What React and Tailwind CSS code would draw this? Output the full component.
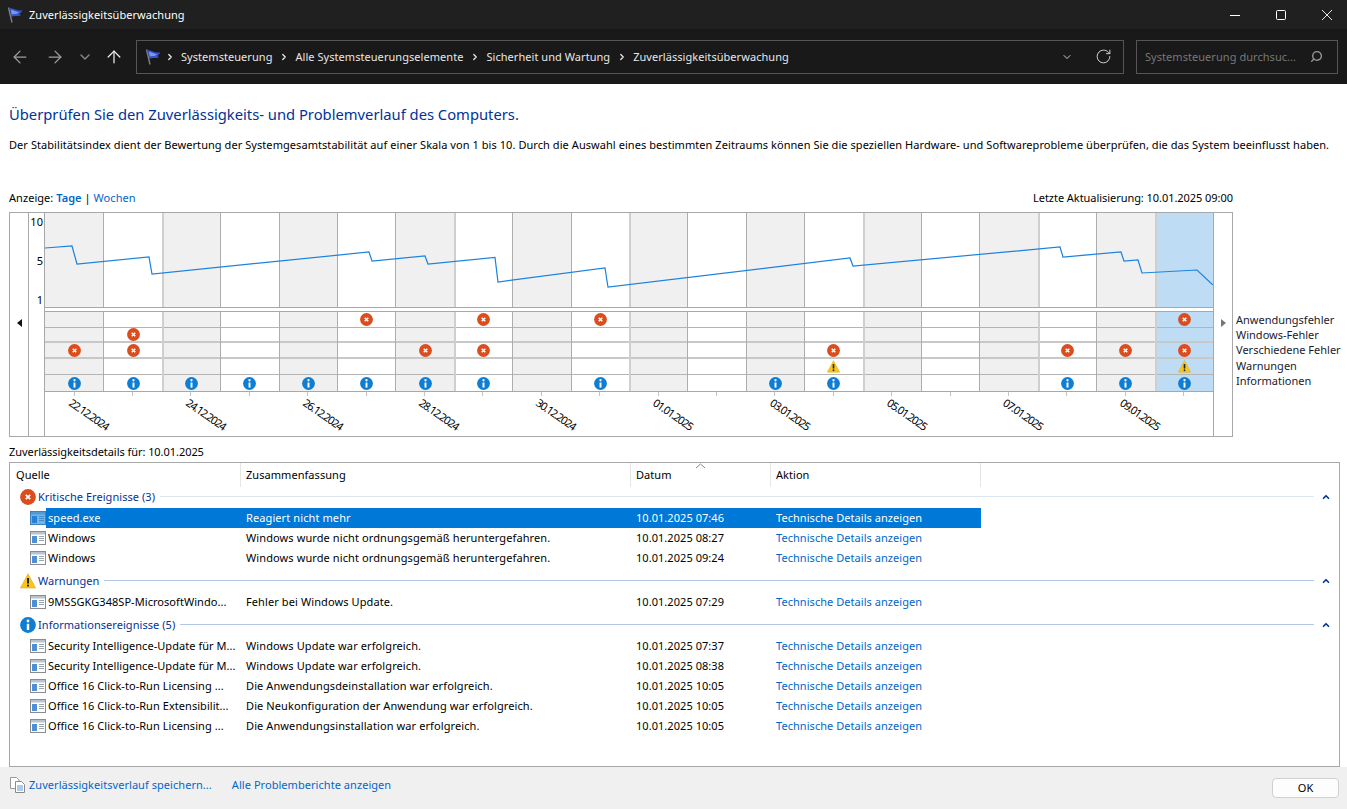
import { ArrowLeft, ArrowRight, ArrowUp, ChevronDown, ChevronRight, RotateCw, Search, ChevronUp } from 'lucide-react'

const linePoints = [
  [45,248],[72,246],[77,264],[149,257],[152,274],[369,252],[372,261],[425,256],[428,264],[495,257.5],[498,282],
  [605,268],[608,287],[850,258],[853,266],[1060,247],[1063,257],[1121,252],[1124,261],[1138,260],[1142,273],[1197,270],[1213,285],
]

const markRows = [
  { kind: 'error', cols: [5, 7, 9, 19], cell: 'h-[16px] border-b border-[#b4b4b4]' },
  { kind: 'error', cols: [1], cell: 'h-[15px] border-b-2 border-[#c8c8c8]' },
  { kind: 'error', cols: [0, 1, 6, 7, 13, 17, 18, 19], cell: 'h-[16px] border-b-2 border-[#c8c8c8]' },
  { kind: 'warn', cols: [13, 19], cell: 'h-[16px] border-b border-[#b4b4b4]' },
  { kind: 'info', cols: [0, 1, 2, 3, 4, 5, 6, 7, 9, 12, 13, 17, 18, 19], cell: 'h-[16px]' },
]

// these column lines come out lighter and 2px wide in the real chart
const lightLines = [2, 7, 10, 14, 17, 19]
const columns = Array.from({ length: 20 }, (_, i) => i)
const dates = ['22.12.2024', null, '24.12.2024', null, '26.12.2024', null, '28.12.2024', null, '30.12.2024', null, '01.01.2025', null, '03.01.2025', null, '05.01.2025', null, '07.01.2025', null, '09.01.2025', null]

const groups = [
  {
    kind: 'error', title: 'Kritische Ereignisse (3)', line: 'bg-[#dbe6f0]',
    rows: [
      ['speed.exe', 'Reagiert nicht mehr', '10.01.2025 07:46', true],
      ['Windows', 'Windows wurde nicht ordnungsgemäß heruntergefahren.', '10.01.2025 08:27'],
      ['Windows', 'Windows wurde nicht ordnungsgemäß heruntergefahren.', '10.01.2025 09:24'],
    ],
  },
  {
    kind: 'warn', title: 'Warnungen', line: 'bg-[#b4c6e6]',
    rows: [['9MSSGKG348SP-MicrosoftWindo...', 'Fehler bei Windows Update.', '10.01.2025 07:29']],
  },
  {
    kind: 'info', title: 'Informationsereignisse (5)', line: 'bg-[#b4c6e6]',
    rows: [
      ['Security Intelligence-Update für M...', 'Windows Update war erfolgreich.', '10.01.2025 07:37'],
      ['Security Intelligence-Update für M...', 'Windows Update war erfolgreich.', '10.01.2025 08:38'],
      ['Office 16 Click-to-Run Licensing ...', 'Die Anwendungsdeinstallation war erfolgreich.', '10.01.2025 10:05'],
      ['Office 16 Click-to-Run Extensibilit...', 'Die Neukonfiguration der Anwendung war erfolgreich.', '10.01.2025 10:05'],
      ['Office 16 Click-to-Run Licensing ...', 'Die Anwendungsinstallation war erfolgreich.', '10.01.2025 10:05'],
    ],
  },
]

function Flag({ size = 16 }) {
  return (
    <svg width={size} height={size} viewBox="0 0 16 16" className="shrink-0">
      <path d="M1.5 .5 L5 15.5" stroke="#808080" strokeWidth="1.4" fill="none" />
      <path d="M2.5 1.5 C5 .5 8 4 15.5 3.5 L12.5 7 L14 8.5 C10 9.5 7 8 4.5 10 Z" fill="#3556d0" />
      <path d="M4 3 C6 2.5 8 5 12 5 L9.5 7 C7 7 6 6.5 4.8 7.5 Z" fill="#7d97ee" />
    </svg>
  )
}

function ErrorIcon({ size = 13 }) {
  return (
    <svg width={size} height={size} viewBox="0 0 16 16" className="shrink-0">
      <circle cx="8" cy="8" r="7.9" fill="#dc4c1c" />
      <path d="M5.8 5.8 L10.2 10.2 M10.2 5.8 L5.8 10.2" stroke="#fff" strokeWidth="1.8" />
    </svg>
  )
}

function WarnIcon({ size = 13 }) {
  return (
    <svg width={size} height={size} viewBox="0 0 16 16" className="shrink-0">
      <path d="M8 .8 L15.6 15 H.4 Z" fill="#fbc61c" stroke="#e0a800" strokeWidth=".6" strokeLinejoin="round" />
      <path d="M8 5 V10.5" stroke="#222" strokeWidth="2" />
      <circle cx="8" cy="12.6" r="1.1" fill="#222" />
    </svg>
  )
}

function InfoIcon({ size = 13 }) {
  return (
    <svg width={size} height={size} viewBox="0 0 16 16" className="shrink-0">
      <circle cx="8" cy="8" r="7.9" fill="#0f7dd2" />
      <path d="M8 6.8 V13" stroke="#fff" strokeWidth="2.4" />
      <circle cx="8" cy="4" r="1.4" fill="#fff" />
    </svg>
  )
}

function Mark({ kind, size }) {
  if (kind === 'error') return <ErrorIcon size={size} />
  if (kind === 'warn') return <WarnIcon size={size} />
  return <InfoIcon size={size} />
}

function WindowIcon({ selected }) {
  return (
    <svg width="16" height="14" viewBox="0 0 16 14" className="shrink-0">
      <rect x=".5" y=".5" width="15" height="13" fill="#fff" stroke="#8c8c8c" />
      <rect x="1" y="1" width="14" height="2.5" fill="#b9c3cf" />
      <rect x="2" y="5" width="5" height="7" fill="#4f8fd6" />
      <path d="M9 5.5 H14 M9 7.5 H14 M9 9.5 H14" stroke="#9aa4ae" />
      {selected && <rect width="16" height="14" fill="#0078d7" opacity=".55" />}
    </svg>
  )
}

function DocsIcon() {
  return (
    <svg width="15" height="16" viewBox="0 0 15 16" className="shrink-0">
      <path d="M.5 .5 H6.5 L9 3 V11.5 H.5 Z" fill="#fff" stroke="#9a9a9a" />
      <path d="M5.5 4.5 H11.5 L14.5 7.5 V15.5 H5.5 Z" fill="#fff" stroke="#8a8a8a" />
      <path d="M7 9 H13 M7 11 H13 M7 13 H13" stroke="#5d97d6" />
    </svg>
  )
}

function Crumb({ children }) {
  return (
    <>
      <ChevronRight size={10} strokeWidth={3} className="mx-[3.5px] shrink-0 text-[#e8e8e8]" />
      <span className="px-[3px]">{children}</span>
    </>
  )
}

function Chart() {
  const line = linePoints.map(([x, y]) => `${x - 45},${y - 213}`).join(' ')
  const colClass = (i) => {
    const bg = i === 19 ? 'bg-[#bfdcf5]' : i % 2 === 0 ? 'bg-[#f0f0f0]' : 'bg-white'
    if (i === 0) return bg
    return `${bg} ${lightLines.includes(i) ? 'border-l-2 border-[#cfcfcf]' : 'border-l border-[#adadad]'}`
  }
  return (
    <div className="flex h-[225px] w-[1224px] shrink-0 border border-[#a8a8a8]">
      <div className="flex w-[19px] shrink-0 justify-center border-r border-[#a8a8a8] pt-[106px]">
        <svg width="5" height="8" viewBox="0 0 5 8"><path d="M5 0 V8 L0 4 Z" fill="#111" /></svg>
      </div>
      <div className="flex w-[16px] shrink-0 flex-col gap-[23px] border-r border-[#a8a8a8] pt-px pr-px text-right">
        <span className="h-[16px]">10</span>
        <span className="h-[16px]">5</span>
        <span className="h-[16px]">1</span>
      </div>
      <div className="flex min-w-0 flex-1 flex-col">
        <div className="relative grid h-[95px] shrink-0 grid-cols-[repeat(20,minmax(0,1fr))] border-b border-[#a8a8a8]">
          {columns.map((i) => (
            <div key={i} className={colClass(i)} />
          ))}
          <svg className="absolute inset-0" width="1168" height="94" viewBox="0 0 1168 94">
            <polyline points={line} fill="none" stroke="#1a83de" strokeWidth="1.2" />
          </svg>
        </div>
        <div className="mt-[3px] grid grid-cols-[repeat(20,minmax(0,1fr))] border-y border-[#a8a8a8]">
          {columns.map((i) => (
            <div key={i} className={`flex flex-col ${colClass(i)}`}>
              {markRows.map((row, r) => (
                <div key={r} className={`flex items-center justify-center ${row.cell}`}>
                  {row.cols.includes(i) && <Mark kind={row.kind} />}
                </div>
              ))}
            </div>
          ))}
        </div>
        <div className="grid flex-1 grid-cols-[repeat(20,minmax(0,1fr))]">
          {columns.map((i) => (
            <div key={i} className="relative flex justify-center">
              <div className="h-[4px] w-px bg-[#c4c4c4]" />
              {dates[i] && (
                <span className="absolute top-[3px] left-[30px] origin-top-left rotate-[35deg] whitespace-nowrap tracking-[-1.1px] text-black">
                  {dates[i]}
                </span>
              )}
            </div>
          ))}
        </div>
      </div>
      <div className="flex w-[19px] shrink-0 justify-center border-l border-[#a8a8a8] pt-[106px]">
        <svg width="5" height="8" viewBox="0 0 5 8"><path d="M0 0 V8 L5 4 Z" fill="#777" /></svg>
      </div>
    </div>
  )
}

function Row({ source, summary, date, selected }) {
  return (
    <div className="ml-[20px] flex h-[20px] items-center">
      <WindowIcon selected={selected} />
      <div className={`flex h-[20px] items-center ${selected ? 'bg-[#0078d7] text-white' : 'text-black'}`}>
        <div className="w-[194px] truncate pl-[2px]">{source}</div>
        <div className="w-[390px] truncate pl-[6px] tracking-[0.1px]">{summary}</div>
        <div className="w-[140px] truncate pl-[6px]">{date}</div>
        <div className={`w-[211px] truncate pl-[6px] ${selected ? '' : 'text-[#0066cc]'}`}>Technische Details anzeigen</div>
      </div>
    </div>
  )
}

function Group({ group, first }) {
  return (
    <div>
      <div className={`flex h-[21px] items-center pr-[7px] pb-[2px] pl-[10px] text-[#003399] ${first ? '' : 'mt-[3px]'}`}>
        <Mark kind={group.kind} size={16} />
        <span className="ml-[2px] whitespace-nowrap">{group.title}</span>
        <div className={`ml-[5px] h-px flex-1 ${group.line}`} />
        <ChevronUp size={10} strokeWidth={4} className="ml-[7px] mr-px text-[#003399]" />
      </div>
      {group.rows.map((r, i) => (
        <Row key={i} source={r[0]} summary={r[1]} date={r[2]} selected={r[3]} />
      ))}
    </div>
  )
}

function App() {
  return (
    <div className="flex h-[809px] w-[1347px] flex-col overflow-hidden bg-white font-['Noto_Sans',sans-serif] text-[11px] leading-[16px] tracking-[0.05px] text-black">
      <div className="flex h-[29px] shrink-0 items-center justify-between bg-[#202020] pl-[7px] text-white">
        <div className="flex items-center gap-[6px]">
          <Flag />
          <span>Zuverlässigkeitsüberwachung</span>
        </div>
        <div className="flex items-center">
          <div className="flex w-[40px] justify-center">
            <svg width="10" height="10" viewBox="0 0 10 10"><path d="M0 5.5 H10" stroke="#fff" /></svg>
          </div>
          <div className="flex w-[52px] justify-center">
            <svg width="10" height="10" viewBox="0 0 10 10"><rect x=".5" y=".5" width="9" height="9" rx="1" fill="none" stroke="#fff" /></svg>
          </div>
          <div className="flex w-[40px] justify-center">
            <svg width="10" height="10" viewBox="0 0 10 10"><path d="M0 0 L10 10 M10 0 L0 10" stroke="#fff" strokeWidth=".9" /></svg>
          </div>
        </div>
      </div>

      <div className="flex h-[55px] shrink-0 items-center bg-[#191919] pr-[9px] pl-[10px]">
        <ArrowLeft size={20} strokeWidth={1.5} className="shrink-0 text-[#a0a0a0]" />
        <ArrowRight size={20} strokeWidth={1.5} className="ml-[15px] shrink-0 text-[#a0a0a0]" />
        <ChevronDown size={16} strokeWidth={2} className="ml-[12px] shrink-0 text-[#8a8a8a]" />
        <ArrowUp size={20} strokeWidth={1.5} className="ml-[11px] shrink-0 text-[#efefef]" />
        <div className="ml-[12px] flex h-[34px] w-[988px] shrink-0 items-center border border-[#555] pl-[8px] text-[#e8e8e8]">
          <Flag />
          <Crumb>Systemsteuerung</Crumb>
          <Crumb>Alle Systemsteuerungselemente</Crumb>
          <Crumb>Sicherheit und Wartung</Crumb>
          <Crumb>Zuverlässigkeitsüberwachung</Crumb>
          <ChevronDown size={12} className="ml-auto text-[#d0d0d0]" />
          <RotateCw size={17} strokeWidth={1.4} className="mr-[11px] ml-[22px] text-[#cfcfcf]" />
        </div>
        <div className="ml-[12px] flex h-[34px] flex-1 items-center justify-between border border-[#555] pr-[14px] pl-[8px] text-[#777]">
          <span>Systemsteuerung durchsuc...</span>
          <Search size={13} strokeWidth={2.5} className="-scale-x-100 text-[#999]" />
        </div>
      </div>

      <div className="flex min-h-0 flex-1 flex-col px-[9px] pt-[20px]">
        <h1 className="text-[14.75px] leading-[20px] font-normal tracking-normal text-[#003399]">Überprüfen Sie den Zuverlässigkeits- und Problemverlauf des Computers.</h1>
        <p className="mt-[13px] whitespace-nowrap tracking-[0.062px]">Der Stabilitätsindex dient der Bewertung der Systemgesamtstabilität auf einer Skala von 1 bis 10. Durch die Auswahl eines bestimmten Zeitraums können Sie die speziellen Hardware- und Softwareprobleme überprüfen, die das System beeinflusst haben.</p>
        <div className="mt-[37px] flex w-[1224px] justify-between">
          <div>
            Anzeige: <span className="font-semibold text-[#0066cc]">Tage</span> | <span className="text-[#0066cc]">Wochen</span>
          </div>
          <div className="tracking-[-0.05px]">Letzte Aktualisierung: 10.01.2025 09:00</div>
        </div>
        <div className="mt-[6px] flex items-start">
          <Chart />
          <div className="mt-[100px] ml-[3px] whitespace-nowrap leading-[15.2px] tracking-normal text-[#1a1a2e]">
            <div>Anwendungsfehler</div>
            <div>Windows-Fehler</div>
            <div>Verschiedene Fehler</div>
            <div>Warnungen</div>
            <div>Informationen</div>
          </div>
        </div>
        <div className="mt-[7px] tracking-[-0.05px]">Zuverlässigkeitsdetails für: 10.01.2025</div>
        <div className="mt-[2px] min-h-0 w-[1331px] flex-1 border border-[#a8a8a8]">
          <div className="relative flex h-[24px]">
            <div className="w-[231px] border-r border-[#e5e5e5] pt-[4px] pl-[6px]">Quelle</div>
            <div className="w-[390px] border-r border-[#e5e5e5] pt-[4px] pl-[5px]">Zusammenfassung</div>
            <div className="w-[140px] border-r border-[#e5e5e5] pt-[4px] pl-[5px]">Datum</div>
            <div className="w-[210px] border-r border-[#e5e5e5] pt-[4px] pl-[5px]">Aktion</div>
            <svg className="absolute top-0 left-[685px]" width="11" height="6" viewBox="0 0 11 6">
              <path d="M1 5 L5.5 1 L10 5" fill="none" stroke="#888" />
            </svg>
          </div>
          {groups.map((g, i) => (
            <Group key={g.title} group={g} first={i === 0} />
          ))}
        </div>
      </div>

      <div className="flex h-[42px] shrink-0 items-start bg-[#f0f0f0] pt-[10px] pr-[8px] pl-[10px] text-[#0066cc]">
        <DocsIcon />
        <span className="ml-[4px]">Zuverlässigkeitsverlauf speichern...</span>
        <span className="ml-[20px]">Alle Problemberichte anzeigen</span>
        <button className="mt-px ml-auto h-[20px] w-[67px] rounded-[4px] border border-[#d0d0d0] bg-[#fdfdfd] text-black">OK</button>
      </div>
    </div>
  )
}

export default App
